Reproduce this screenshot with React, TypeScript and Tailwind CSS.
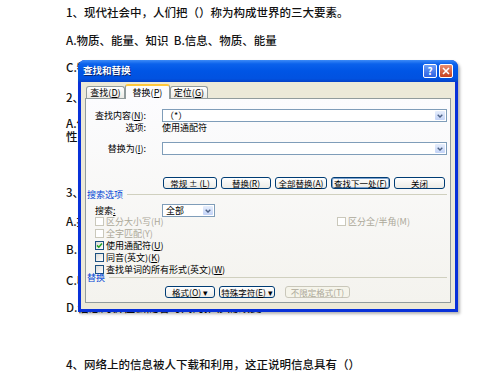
import React from "react";

// 背景文档的行（被对话框遮住的部分也照写）
const docLines = [
  { t: "1、现代社会中，人们把（）称为构成世界的三大要素。", c: "mt-[6px] h-[14px]" },
  { t: "A.物质、能量、知识  B.信息、物质、能量", c: "mt-[14px] h-[14px]" },
  { t: "C.物质、信息、知识 D.信息、能量、知识", c: "mt-[13px] h-[14px]" },
  { t: "2、下列关于信息的说法，不正确的是（）", c: "mt-[16px] h-[14px]" },
  { t: "A.信息可以脱离载体而独立存在，具有", c: "mt-[13px] h-[12px]" },
  { t: "性", c: "mt-0 h-[14px]" },
  { t: "3、下列选项中，不属于信息的是（）", c: "mt-[42px] h-[14px]" },
  { t: "A.报纸上刊登的新闻", c: "mt-[15px] h-[14px]" },
  { t: "B.电视里播放的天气预报", c: "mt-[14px] h-[14px]" },
  { t: "C.收音机里的广播", c: "mt-[17px] h-[14px]" },
  { t: "D.信息的价值会随着时间的推移而改变", c: "mt-[13px] h-[14px]" },
  { t: "4、网络上的信息被人下载和利用，这正说明信息具有（）", c: "mt-[43px] h-[14px]" },
];

const Chevron = () => (
  <svg width="6" height="4" viewBox="0 0 6 4">
    <path d="M0.7 0.8 L3 3 L5.3 0.8" fill="none" stroke="#4D6185" strokeWidth="1.4" />
  </svg>
);

const Combo = ({ text, w }: { text?: string; w: string }) => (
  <div className={`${w} h-[13px] border border-[#7F9DB9] bg-white flex items-center`}>
    <span className="pl-[2px] text-[9px] leading-none text-black">{text}</span>
    <div className="ml-auto mr-[1px] w-[10px] h-[9px] rounded-[1px] bg-[linear-gradient(180deg,#E6EEFC,#C3D3F7)] flex items-center justify-center">
      <Chevron />
    </div>
  </div>
);

const Btn = ({
  w,
  children,
  def,
  disabled,
}: {
  w: string;
  children: React.ReactNode;
  def?: boolean;
  disabled?: boolean;
}) => (
  <div
    className={`${w} h-[12px] rounded-[3px] border flex items-center justify-center text-[8.5px] leading-none ${
      disabled
        ? "border-[#C9C7BA] bg-[#F5F4EA] text-[#ACA899]"
        : def
        ? "border-[#003C74] bg-[linear-gradient(180deg,#FFFFFF,#ECEBE6)] text-black shadow-[inset_0_0_0_1px_#7DA2CE]"
        : "border-[#003C74] bg-[linear-gradient(180deg,#FFFFFF,#ECEBE6)] text-black"
    }`}
  >
    {children}
  </div>
);

const Check = ({ checked, disabled }: { checked?: boolean; disabled?: boolean }) => (
  <div
    className={`w-[9px] h-[9px] border flex items-center justify-center ${
      disabled
        ? "border-[#CAC8BB] bg-white"
        : "border-[#1C5180] bg-[linear-gradient(135deg,#DCDCD7,#FFFFFF)]"
    }`}
  >
    {checked && (
      <svg width="7" height="7" viewBox="0 0 7 7">
        <path d="M1 3.4 L2.8 5.2 L6 1.6" fill="none" stroke="#21A121" strokeWidth="1.5" />
      </svg>
    )}
  </div>
);

const CheckRow = ({
  label,
  checked,
  disabled,
  extra,
}: {
  label: React.ReactNode;
  checked?: boolean;
  disabled?: boolean;
  extra?: React.ReactNode;
}) => (
  <div className="h-[12px] flex items-center pl-[9px]">
    <div className="w-[242px] flex items-center gap-[2px]">
      <Check checked={checked} disabled={disabled} />
      <span className={`text-[9px] leading-none ${disabled ? "text-[#ACA899]" : "text-black"}`}>
        {label}
      </span>
    </div>
    {extra}
  </div>
);

const Tab = ({ label, active, w }: { label: React.ReactNode; active?: boolean; w: string }) => (
  <div
    className={
      active
        ? `${w} h-[15px] -mb-[1px] relative z-10 rounded-t-[3px] border border-b-0 border-[#919B9C] border-t-2 border-t-[#FFC83C] bg-[#FCFCFE] flex items-center justify-center text-[9px] leading-none text-black`
        : `${w} h-[12px] rounded-t-[3px] border border-b-0 border-[#919B9C] bg-[linear-gradient(180deg,#FFFFFF,#ECEBE6)] flex items-center justify-center text-[9px] leading-none text-black`
    }
  >
    {label}
  </div>
);

const Dialog = () => (
  <div className="absolute left-[78px] top-[60px] w-[380px] h-[252px] rounded-t-[7px] overflow-hidden bg-[#0831D9] flex flex-col shadow-[2px_2px_3px_rgba(0,0,0,0.3)] font-['Noto_Sans_CJK_SC','Noto_Sans',sans-serif]">
    {/* 标题栏 */}
    <div className="h-[22px] flex items-center pl-[5px] pr-[5px] bg-[linear-gradient(180deg,#3D8BF7_0%,#0B62EC_18%,#0055E5_50%,#0152E0_85%,#0640C6_100%)]">
      <span className="text-white font-bold text-[9.5px] leading-none [text-shadow:1px_1px_0_#0A246A]">
        查找和替换
      </span>
      <div className="ml-auto flex gap-[2px]">
        <div className="w-[14px] h-[14px] rounded-[2px] border border-white bg-[linear-gradient(180deg,#6B9EF8,#2E62E2)] flex items-center justify-center text-white font-bold text-[10px] leading-none">
          ?
        </div>
        <div className="w-[14px] h-[14px] rounded-[2px] border border-white bg-[linear-gradient(180deg,#E98E70,#C6401E)] flex items-center justify-center">
          <svg width="8" height="8" viewBox="0 0 8 8">
            <path d="M1 1 L7 7 M7 1 L1 7" stroke="white" strokeWidth="1.6" />
          </svg>
        </div>
      </div>
    </div>

    {/* 主体 */}
    <div className="flex-1 mx-[3px] mb-[3px] bg-[#ECE9D8] flex flex-col px-[4px] pt-[2px]">
      <div className="h-[14px] flex items-end pl-[1px]">
        <Tab w="w-[39px]" label={<>查找(<span className="underline">D</span>)</>} />
        <Tab w="w-[45px]" active label={<>替换(<span className="underline">P</span>)</>} />
        <Tab w="w-[38px]" label={<>定位(<span className="underline">G</span>)</>} />
      </div>

      <div className="h-[205px] border border-[#919B9C] bg-[linear-gradient(180deg,#FCFCFE,#F4F3EE)] flex flex-col text-black">
        {/* 查找内容 */}
        <div className="mt-[10px] h-[13px] flex items-center">
          <div className="w-[60px] text-right text-[9px] leading-none">
            查找内容(<span className="underline">N</span>):
          </div>
          <div className="ml-[16px] flex-1 mr-[3px] flex">
            <Combo w="flex-1" text="（*）" />
          </div>
        </div>
        <div className="h-[10px] flex items-center">
          <div className="w-[60px] text-right text-[9px] leading-none">选项:</div>
          <div className="ml-[16px] text-[9px] leading-none">使用通配符</div>
        </div>

        {/* 替换为 */}
        <div className="mt-[10px] h-[13px] flex items-center">
          <div className="w-[60px] text-right text-[9px] leading-none">
            替换为(<span className="underline">I</span>):
          </div>
          <div className="ml-[16px] flex-1 mr-[3px] flex">
            <Combo w="flex-1" />
          </div>
        </div>

        {/* 按钮 */}
        <div className="mt-[22px] h-[12px] flex items-center pl-[77px] gap-[4px]">
          <Btn w="w-[54px]">常规 ± (<span className="underline">L</span>)</Btn>
          <Btn w="w-[50px]">替换(<span className="underline">R</span>)</Btn>
          <Btn w="w-[52px]">全部替换(<span className="underline">A</span>)</Btn>
          <Btn w="w-[59px]" def>查找下一处(<span className="underline">F</span>)</Btn>
          <Btn w="w-[51px]">关闭</Btn>
        </div>

        {/* 搜索选项 */}
        <div className="h-[10px] flex items-center pl-[1px] pr-[3px]">
          <span className="text-[9px] leading-none text-[#0046D5]">搜索选项</span>
          <div className="flex-1 ml-[4px] border-t border-[#D0D0BF]" />
        </div>
        <div className="mt-[5px] h-[13px] flex items-center pl-[9px]">
          <div className="w-[67px] text-[9px] leading-none">
            搜索<span className="underline">:</span>
          </div>
          <div className="w-[53px] h-[13px] border border-[#7F9DB9] bg-white flex items-center">
            <span className="pl-[3px] text-[9px] leading-none">全部</span>
            <div className="ml-auto mr-[1px] w-[10px] h-[9px] rounded-[1px] bg-[linear-gradient(180deg,#E6EEFC,#C3D3F7)] flex items-center justify-center">
              <Chevron />
            </div>
          </div>
        </div>

        <div className="-mt-[2px] flex flex-col">
          <CheckRow
            disabled
            label="区分大小写(H)"
            extra={
              <div className="flex items-center gap-[2px]">
                <Check disabled />
                <span className="text-[9px] leading-none text-[#ACA899]">区分全/半角(M)</span>
              </div>
            }
          />
          <CheckRow disabled label="全字匹配(Y)" />
          <CheckRow checked label={<>使用通配符(<span className="underline">U</span>)</>} />
          <CheckRow label={<>同音(英文)(<span className="underline">K</span>)</>} />
          <CheckRow label={<>查找单词的所有形式(英文)(<span className="underline">W</span>)</>} />
        </div>

        {/* 替换 */}
        <div className="-mt-[3px] h-[10px] flex items-center pl-[1px] pr-[3px]">
          <span className="text-[9px] leading-none text-[#0046D5]">替换</span>
          <div className="flex-1 ml-[4px] border-t border-[#D0D0BF]" />
        </div>
        <div className="mt-[4px] h-[12px] flex items-center pl-[79px]">
          <Btn w="w-[50px]">
            格式(<span className="underline">O</span>) ▾
          </Btn>
          <div className="ml-[4px]">
            <Btn w="w-[56px]">
              特殊字符(<span className="underline">E</span>) ▾
            </Btn>
          </div>
          <div className="ml-[10px]">
            <Btn w="w-[65px]" disabled>
              不限定格式(T)
            </Btn>
          </div>
        </div>
      </div>
    </div>
  </div>
);

export default function App() {
  return (
    <div className="relative w-[500px] h-[375px] bg-white overflow-hidden">
      <div className="flex flex-col pl-[66px] text-[11.5px] font-medium text-[#111] font-['Noto_Sans_CJK_SC','Noto_Sans',sans-serif]">
        {docLines.map((l, i) => (
          <div key={i} className={`${l.c} flex items-center whitespace-pre`}>
            {l.t}
          </div>
        ))}
      </div>
      <Dialog />
    </div>
  );
}
